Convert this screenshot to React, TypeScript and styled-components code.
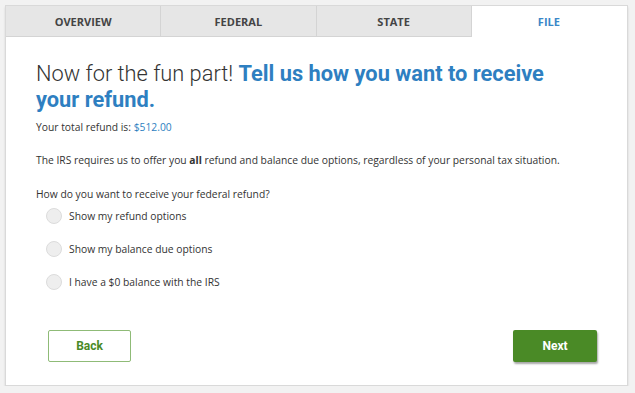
import styled, { createGlobalStyle } from "styled-components";

const GlobalStyle = createGlobalStyle`
  body {
    margin: 0;
    background: #f2f2f2;
    font-family: "Open Sans", "Liberation Sans", sans-serif;
  }
`;

const tabs = ["OVERVIEW", "FEDERAL", "STATE", "FILE"];
const options = [
  "Show my refund options",
  "Show my balance due options",
  "I have a $0 balance with the IRS",
];

export default function App() {
  return (
    <Page>
      <GlobalStyle />
      <Card>
        <TabBar>
          {tabs.map((t) => (
            <Tab key={t} $active={t === "FILE"}>
              {t}
            </Tab>
          ))}
        </TabBar>
        <Body>
          <Heading>
            Now for the fun part! <strong>Tell us how you want to receive your refund.</strong>
          </Heading>
          <Text $top={7}>
            Your total refund is: <Amount>$512.00</Amount>
          </Text>
          <Text $top={18}>
            The IRS requires us to offer you <b>all</b> refund and balance due options,
            regardless of your personal tax situation.
          </Text>
          <Text $top={19}>How do you want to receive your federal refund?</Text>
          <Options>
            {options.map((o) => (
              <Option key={o}>
                <Radio />
                {o}
              </Option>
            ))}
          </Options>
          <Footer>
            <BackButton>Back</BackButton>
            <NextButton>Next</NextButton>
          </Footer>
        </Body>
      </Card>
    </Page>
  );
}

const Page = styled.div`
  padding: 5px 0 0 5px;
`;
const Card = styled.div`
  width: 621px;
  height: 379px;
  background: #ffffff;
  border: 1px solid #d9d9d9;
  box-shadow: 0 2px 2px rgba(0, 0, 0, 0.12);
  display: flex;
  flex-direction: column;
`;
const TabBar = styled.div`
  display: grid;
  grid-template-columns: repeat(4, 1fr);
  height: 31px;
`;
const Tab = styled.div<{ $active?: boolean }>`
  display: flex;
  align-items: center;
  justify-content: center;
  font-size: 11px;
  font-weight: 700;
  color: ${(p) => (p.$active ? "#3a87c8" : "#444444")};
  background: ${(p) => (p.$active ? "#ffffff" : "#e6e6e6")};
  border-right: 1px solid ${(p) => (p.$active ? "transparent" : "#d4d4d4")};
  border-bottom: 1px solid ${(p) => (p.$active ? "transparent" : "#d4d4d4")};
`;
const Body = styled.div`
  flex: 1;
  display: flex;
  flex-direction: column;
  padding: 24px 30px 23px 30px;
`;
const Heading = styled.h1`
  margin: 0;
  font-family: Roboto, "Liberation Sans", sans-serif;
  font-weight: 300;
  font-size: 21.8px;
  line-height: 26px;
  color: #333333;
  width: 540px;
  strong {
    font-weight: 700;
    color: #2e7fc1;
  }
`;
const Text = styled.p<{ $top?: number }>`
  margin: ${(p) => p.$top ?? 9}px 0 0 0;
  font-size: 10.3px;
  line-height: 15px;
  color: #333333;
  b {
    font-weight: 700;
  }
`;
const Amount = styled.span`
  color: #2e7fc1;
`;
const Options = styled.div`
  display: flex;
  flex-direction: column;
  gap: 15px;
  margin-top: 5px;
  padding-left: 10px;
`;
const Option = styled.label`
  display: flex;
  align-items: center;
  gap: 7px;
  font-size: 10.3px;
  line-height: 18px;
  color: #333333;
`;
const Radio = styled.span`
  width: 14px;
  height: 14px;
  border-radius: 50%;
  background: #eeeeee;
  border: 1px solid #dcdcdc;
`;
const Footer = styled.div`
  margin-top: auto;
  display: flex;
  justify-content: space-between;
  padding: 0 0 0 12px;
`;
const BackButton = styled.button`
  width: 83px;
  height: 32px;
  background: #ffffff;
  border: 1px solid #8fbb77;
  border-radius: 2px;
  color: #4a8a26;
  font-family: Roboto, "Liberation Sans", sans-serif;
  font-weight: 700;
  font-size: 12px;
`;
const NextButton = styled.button`
  width: 84px;
  height: 32px;
  background: #4a8a26;
  border: none;
  border-radius: 2px;
  box-shadow: 1px 2px 2px rgba(0, 0, 0, 0.35);
  color: #ffffff;
  font-family: Roboto, "Liberation Sans", sans-serif;
  font-weight: 700;
  font-size: 12px;
`;
